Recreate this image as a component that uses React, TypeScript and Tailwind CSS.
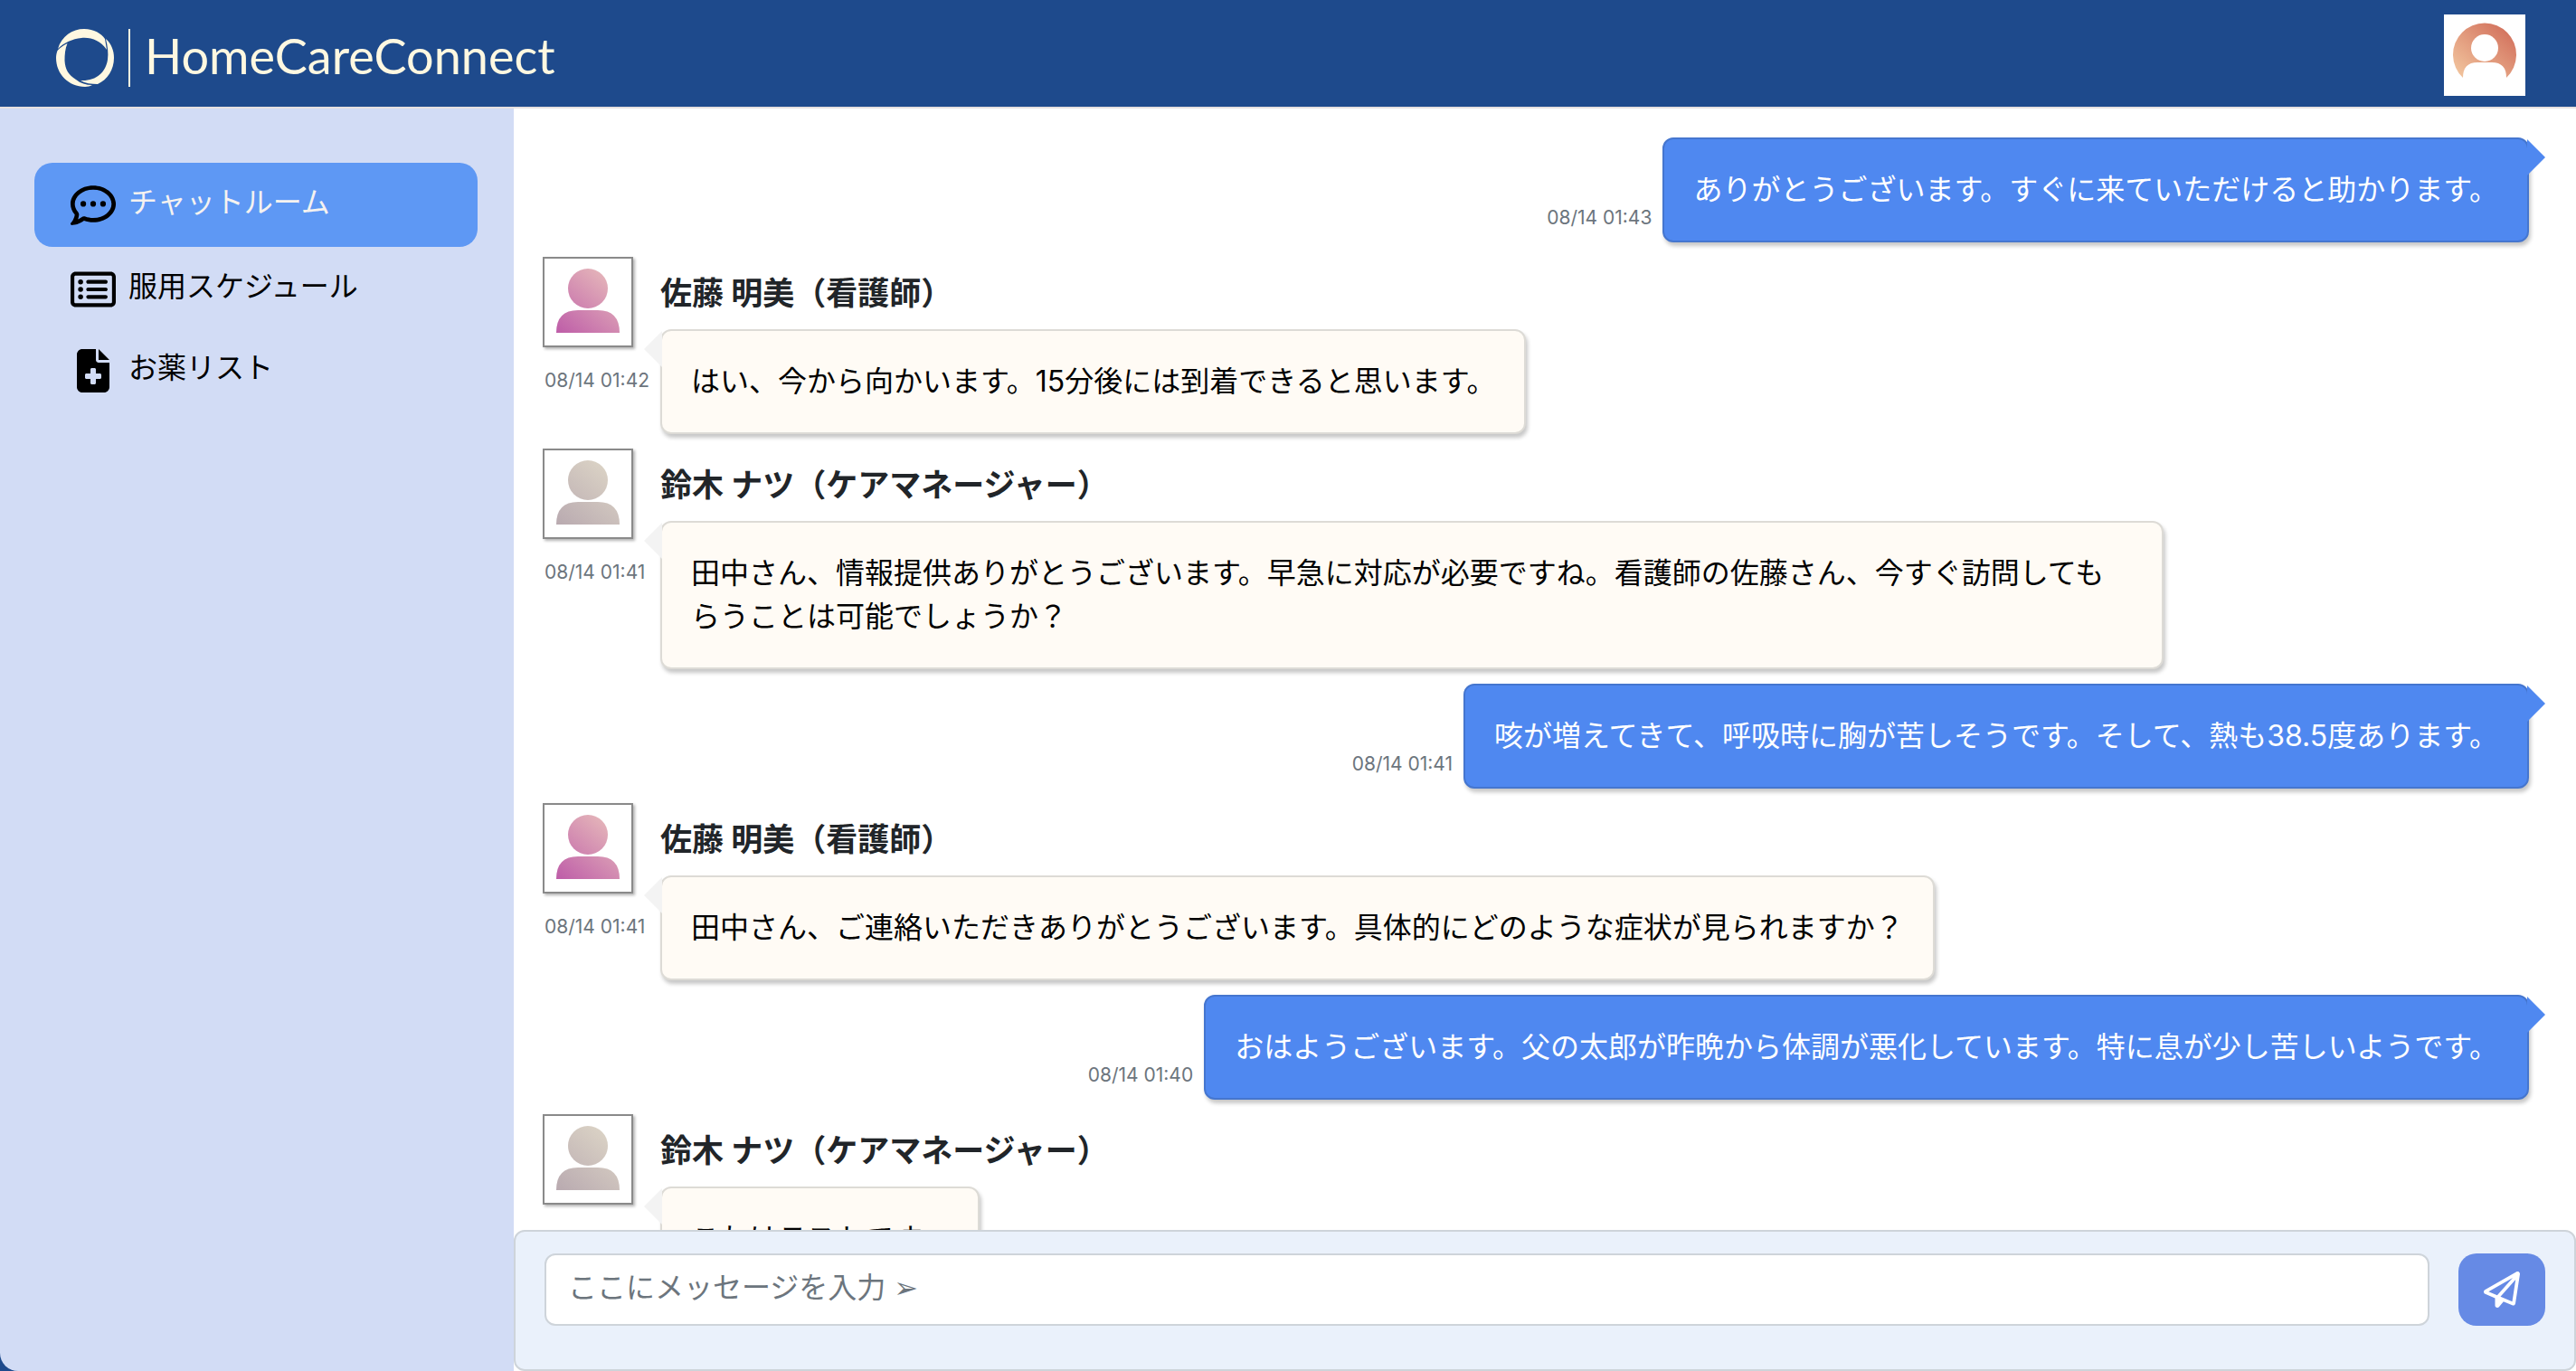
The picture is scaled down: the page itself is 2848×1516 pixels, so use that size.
import { FaRegCommentDots, FaRegRectangleList, FaFileMedical, FaRegPaperPlane } from "react-icons/fa6";

type Message =
  | { kind: "sent"; text: string; time: string }
  | { kind: "received"; text: string; time: string; name: string; tone: "pink" | "sand" };

const messages: Message[] = [
  { kind: "sent", text: "ありがとうございます。すぐに来ていただけると助かります。", time: "08/14 01:43" },
  { kind: "received", name: "佐藤 明美（看護師）", tone: "pink", text: "はい、今から向かいます。15分後には到着できると思います。", time: "08/14 01:42" },
  { kind: "received", name: "鈴木 ナツ（ケアマネージャー）", tone: "sand", text: "田中さん、情報提供ありがとうございます。早急に対応が必要ですね。看護師の佐藤さん、今すぐ訪問してもらうことは可能でしょうか？", time: "08/14 01:41" },
  { kind: "sent", text: "咳が増えてきて、呼吸時に胸が苦しそうです。そして、熱も38.5度あります。", time: "08/14 01:41" },
  { kind: "received", name: "佐藤 明美（看護師）", tone: "pink", text: "田中さん、ご連絡いただきありがとうございます。具体的にどのような症状が見られますか？", time: "08/14 01:41" },
  { kind: "sent", text: "おはようございます。父の太郎が昨晩から体調が悪化しています。特に息が少し苦しいようです。", time: "08/14 01:40" },
  { kind: "received", name: "鈴木 ナツ（ケアマネージャー）", tone: "sand", text: "これはテストです。", time: "08/14 01:40" },
];

const navItems = [
  { label: "チャットルーム", Icon: FaRegCommentDots, iconClass: "size-[50px]", active: true },
  { label: "服用スケジュール", Icon: FaRegRectangleList, iconClass: "size-[50px]", active: false },
  { label: "お薬リスト", Icon: FaFileMedical, iconClass: "h-12 w-[50px]", active: false },
];

function Logo() {
  return (
    <svg viewBox="0 0 64 64" className="size-16" fill="#fff8e1" aria-hidden="true">
      <path d="M2 22C6 8 18 0 31 0C42 0 50 5 54 11L56 23C49 13 39 9 28 10C18 11 9 15 2 22Z" />
      <path d="M55 11C61 16 64 24 64 32C64 45 57 56 46 61C39 61 32 60 27 57C44 58 55 48 57 34C58 27 57 19 55 11Z" />
      <path d="M12.5 16C8 18 4 21 1.5 24C0.5 27 0 29 0 32C0 50 14 64 32 64C35 64 38 63 40 62C33 62 27 60 22 56C14 51 10 45 9.5 35C9.500 28 10 22 12.5 16Z" />
    </svg>
  );
}

function UserAvatar() {
  return (
    <svg viewBox="0 0 90 90" className="size-[90px] bg-white" aria-hidden="true">
      <defs>
        <linearGradient id="user" x1="0" y1="1" x2="1" y2="0">
          <stop offset="0.1" stopColor="#f0c09a" />
          <stop offset="0.9" stopColor="#d2705c" />
        </linearGradient>
      </defs>
      <path fill="url(#user)" d="M21 70A35 35 0 1 1 69 70Q69 53 53 53H37Q21 53 21 70Z" />
      <circle cx="45" cy="37" r="15" fill="#fff" />
    </svg>
  );
}

function ContactAvatar({ tone }: { tone: "pink" | "sand" }) {
  const id = `contact-${tone}`;
  const [from, to] = tone === "pink" ? ["#be5da8", "#e6b8ba"] : ["#b9aab0", "#dcd4c6"];
  return (
    <svg
      viewBox="0 0 96 96"
      className="size-[100px] border-2 border-[#8a8a8a] bg-white shadow-[2px_2px_3px_rgba(0,0,0,0.3)]"
      aria-hidden="true"
    >
      <defs>
        <linearGradient id={id} gradientUnits="userSpaceOnUse" x1="14" y1="82" x2="70" y2="14">
          <stop offset="0" stopColor={from} />
          <stop offset="1" stopColor={to} />
        </linearGradient>
      </defs>
      <g fill={`url(#${id})`}>
        <circle cx="48" cy="33" r="22" />
        <path d="M13 82Q13 57 37 57H59Q83 57 83 82Z" />
      </g>
    </svg>
  );
}

function MessageRow({ message }: { message: Message }) {
  if (message.kind === "sent") {
    return (
      <li className="flex items-end justify-end gap-3 pr-5">
        <time className="pb-3 text-[21px] leading-[30px] text-[#6c757d]">{message.time}</time>
        <div className="relative max-w-3/4 rounded-xl border-2 border-[#4576cf] bg-[#4f88f0] p-8 text-white shadow-[2px_4px_4px_rgba(0,0,0,0.22)]">
          <p>{message.text}</p>
          <span className="absolute top-0 -right-5 h-10 w-5 bg-[#4f88f0] [clip-path:polygon(0_0,100%_50%,0_100%)]" />
        </div>
      </li>
    );
  }
  return (
    <li className="flex items-start">
      <div className="flex w-[130px] shrink-0 flex-col gap-[22px]">
        <ContactAvatar tone={message.tone} />
        <time className="pl-0.5 text-[21px] leading-[30px] whitespace-nowrap text-[#6c757d]">{message.time}</time>
      </div>
      <div className="flex max-w-3/4 flex-col items-start">
        <h2 className="flex h-20 items-center text-[35px] font-bold text-[#212529]">{message.name}</h2>
        <div className="relative rounded-xl border-2 border-[#dddbd6] bg-[#fffbf5] p-8 text-black shadow-[2px_4px_4px_rgba(0,0,0,0.22)]">
          <p>{message.text}</p>
          <span className="absolute top-0 -left-5 h-10 w-5 bg-[#f3f3f3] [clip-path:polygon(100%_0,0_50%,100%_100%)]" />
        </div>
      </div>
    </li>
  );
}

export default function App() {
  return (
    <div className="flex h-screen flex-col overflow-hidden bg-[#1e4a8c] font-[Inter,'Noto_Sans_CJK_JP','DejaVu_Sans',sans-serif] text-[32px] leading-[48px]">
      <header className="flex h-[120px] shrink-0 items-start justify-between border-b-2 border-[#e6e0e0] bg-[#1e4a8c] pr-14 pl-[62px]">
        <a href="#" className="flex items-center gap-4 pt-8 text-[#fff8e1]">
          <Logo />
          <span className="h-16 w-0.5 bg-[#fff8e1]" />
          <span className="pb-1 font-[Lato,sans-serif] text-[54px] leading-[60px]">HomeCareConnect</span>
        </a>
        <button type="button" aria-label="アカウント" className="pt-4">
          <UserAvatar />
        </button>
      </header>

      <div className="flex min-h-0 flex-1">
        <nav className="w-[568px] shrink-0 rounded-bl-[20px] bg-[#d2dcf5] pt-[60px] pr-10 pl-[38px]">
          <ul>
            {navItems.map(({ label, Icon, iconClass, active }) => (
              <li key={label}>
                <a
                  href="#"
                  aria-current={active ? "page" : undefined}
                  className={
                    active
                      ? "mb-0.5 flex h-[93px] items-center gap-3.5 rounded-[20px] bg-[#5e98f4] pl-10 text-[#f5f2f0]"
                      : "flex h-[90px] items-center gap-3.5 pl-10 text-black"
                  }
                >
                  <span className="shrink-0 text-black">
                    <Icon className={iconClass} />
                  </span>
                  <span className="pb-1.5">{label}</span>
                </a>
              </li>
            ))}
          </ul>
        </nav>

        <main className="flex min-w-0 flex-1 flex-col bg-white">
          <ul className="flex min-h-0 flex-1 flex-col gap-4 overflow-hidden px-8 pt-8">
            {messages.map((message, index) => (
              <MessageRow key={index} message={message} />
            ))}
          </ul>
          <form
            className="flex h-[156px] shrink-0 items-start gap-8 rounded-xl border-2 border-[#ced4da] bg-[#eaf1fb] px-8 pt-6"
            onSubmit={(event) => event.preventDefault()}
          >
            <input
              type="text"
              aria-label="メッセージ"
              placeholder="ここにメッセージを入力 ➢"
              className="h-20 min-w-0 flex-1 rounded-xl border-2 border-[#ced4da] bg-white px-6 pb-1.5 placeholder:text-[#6c757d]"
            />
            <button
              type="submit"
              aria-label="送信"
              className="flex h-20 w-24 shrink-0 items-center justify-center rounded-[20px] bg-[#668ae5] text-white"
            >
              <FaRegPaperPlane className="size-10" />
            </button>
          </form>
        </main>
      </div>
    </div>
  );
}
